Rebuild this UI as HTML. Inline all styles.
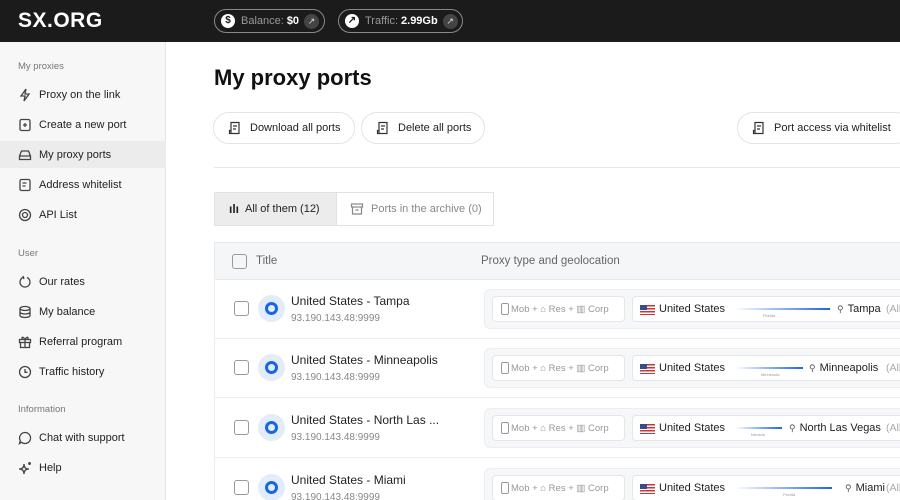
<!DOCTYPE html>
<html><head><meta charset="utf-8"><style>
*{box-sizing:border-box;margin:0;padding:0}
html{overflow:hidden;width:900px;height:500px}
body{width:900px;height:500px;overflow:hidden;background:#fff;font-family:"Liberation Sans",sans-serif;color:#1e1e1e;position:relative}
.a{position:absolute}
.hdr{left:0;top:0;width:900px;height:42px;background:#1b1b1b}
.logo{left:18px;top:9px;color:#fff;font-weight:bold;font-size:21px;letter-spacing:0.5px}
.pill{top:9px;height:24px;border:1.5px solid #8a8a8a;border-radius:12px;color:#9a9a9a;font-size:11px;display:flex;align-items:center;padding-left:6px}
.pill b{color:#fff;margin-left:3px}
.pill .ic{width:14px;height:14px;border-radius:50%;background:#fff;margin-right:6px;color:#1b1b1b;font-size:10px;font-weight:bold;text-align:center;line-height:14px}
.pill .ar{width:15px;height:15px;border-radius:50%;background:#444;color:#ddd;font-size:9px;text-align:center;line-height:15px;margin-left:5px}
.side{left:0;top:42px;width:166px;height:458px;background:#f7f7f7;border-right:1px solid #e6e6e6}
.sec{left:18px;font-size:9.5px;color:#777}
.it{left:0;width:166px;height:27px;font-size:11px;color:#222;display:flex;align-items:center;padding-left:18px}
.it svg{width:14px;height:14px;margin-right:7px;flex:none}
.it.on{background:#ececec}
h1{position:absolute;left:214px;top:65px;font-size:22px;font-weight:bold;color:#111}
.btn{top:112px;height:32px;border:1px solid #e4e4e4;border-radius:16px;font-size:11px;display:flex;align-items:center;padding:0 13px 0 14px;color:#222}
.btn svg{width:14px;height:14px;margin-right:8px}
.tab{top:192px;height:34px;font-size:11px;display:flex;align-items:center}
.thead{left:214px;top:242px;width:690px;height:38px;background:#f5f6f8;border:1px solid #e8e9ec;border-right:none}
.cb{width:15px;height:15px;border:1.5px solid #999;border-radius:3px}
.row{left:214px;width:690px;height:60px;border-left:1px solid #ececec;border-bottom:1px solid #ececec}
.row .cb{position:absolute;left:19px;top:22px}
.row .ci{position:absolute;left:43px;top:16px;width:27px;height:27px;border-radius:50%;background:#e2ecfb}
.row .ci:after{content:"";position:absolute;left:7px;top:7px;width:13px;height:13px;box-sizing:border-box;border:3px solid #1766e8;border-radius:50%}
.row .nm{position:absolute;left:76px;top:15px;font-size:12px;color:#222}
.row .ip{position:absolute;left:76px;top:34px;font-size:10px;color:#888}
.geo{position:absolute;left:269px;top:10px;width:430px;height:40px;background:#f6f7f9;border:1px solid #eceef1;border-radius:6px}
.tp{position:absolute;left:7px;top:6px;width:133px;height:26px;background:#fff;border:1px solid #e6e6e6;border-radius:4px;font-size:9.5px;color:#999;display:flex;align-items:center;padding-left:8px}
.tp i{display:inline-block;width:8px;height:12px;border:1px solid #999;border-radius:2px;margin-right:2px}
.ct{position:absolute;left:147px;top:6px;width:300px;height:26px;background:#fff;border:1px solid #e6e6e6;border-radius:4px;font-size:11px;color:#222}
.flag{position:absolute;left:7px;top:8px;width:15px;height:10px;background:repeating-linear-gradient(#c33 0 1.5px,#fff 1.5px 3px)}
.flag:before{content:"";position:absolute;left:0;top:0;width:7px;height:5px;background:#3b4a8a}
.us{position:absolute;left:26px;top:6px}
.ln{position:absolute;top:11px;left:102px;height:2px;background:linear-gradient(90deg,#fff,#1d63e6)}
.st{position:absolute;top:16px;font-size:4px;color:#999}
.city{position:absolute;top:6px}
.city:before{content:"⚲";font-size:9px;color:#555;margin-right:4px}
.all{position:absolute;top:6px;color:#aaa;font-size:10.5px}
</style></head><body>
<div class="a hdr"></div>
<div class="a logo">SX.ORG</div>
<div class="a pill" style="left:214px;width:111px"><span class="ic">$</span>Balance:<b>$0</b><span class="ar">↗</span></div>
<div class="a pill" style="left:338px;width:125px"><span class="ic">↗</span>Traffic:<b>2.99Gb</b><span class="ar">↗</span></div>

<div class="a side"></div>
<div class="a sec" style="top:61px">My proxies</div>
<div class="a it" style="top:81px"><svg viewBox="0 0 14 14" fill="none" stroke="#444" stroke-width="1.3"><path d="M8 1L3 8h4l-1 5 5-7H7z"/></svg>Proxy on the link</div>
<div class="a it" style="top:111px"><svg viewBox="0 0 14 14" fill="none" stroke="#444" stroke-width="1.3"><rect x="2" y="1.5" width="10" height="11" rx="1.5"/><path d="M7 5v4M5 7h4"/></svg>Create a new port</div>
<div class="a it on" style="top:141px"><svg viewBox="0 0 14 14" fill="none" stroke="#444" stroke-width="1.3"><path d="M1.5 8l2-5h7l2 5v3.5h-11z M1.5 8h11"/></svg>My proxy ports</div>
<div class="a it" style="top:171px"><svg viewBox="0 0 14 14" fill="none" stroke="#444" stroke-width="1.3"><rect x="2" y="1.5" width="10" height="11" rx="1.5"/><path d="M4.5 5h4M4.5 8h3"/></svg>Address whitelist</div>
<div class="a it" style="top:201px"><svg viewBox="0 0 14 14" fill="none" stroke="#444" stroke-width="1.3"><circle cx="7" cy="7" r="5.5"/><circle cx="7" cy="7" r="2.5"/></svg>API List</div>
<div class="a sec" style="top:248px">User</div>
<div class="a it" style="top:268px"><svg viewBox="0 0 14 14" fill="none" stroke="#444" stroke-width="1.3"><path d="M5 2.5A5 5 0 1 0 9 2.5M5 1l1 3"/></svg>Our rates</div>
<div class="a it" style="top:298px"><svg viewBox="0 0 14 14" fill="none" stroke="#444" stroke-width="1.3"><ellipse cx="7" cy="3.5" rx="5" ry="2"/><path d="M2 3.5v7c0 1 2 2 5 2s5-1 5-2v-7M2 7c0 1 2 2 5 2s5-1 5-2"/></svg>My balance</div>
<div class="a it" style="top:328px"><svg viewBox="0 0 14 14" fill="none" stroke="#444" stroke-width="1.3"><rect x="1.5" y="4.5" width="11" height="3"/><path d="M2.5 7.5v5h9v-5M7 4.5v8M7 4.5C5 1 3 2 4.5 4.5M7 4.5C9 1 11 2 9.5 4.5"/></svg>Referral program</div>
<div class="a it" style="top:358px"><svg viewBox="0 0 14 14" fill="none" stroke="#444" stroke-width="1.3"><circle cx="7" cy="7" r="5.5"/><path d="M7 4v3.3h2.5"/></svg>Traffic history</div>
<div class="a sec" style="top:404px">Information</div>
<div class="a it" style="top:424px"><svg viewBox="0 0 14 14" fill="none" stroke="#444" stroke-width="1.3"><path d="M7 1.5a5.5 5.5 0 1 1-3.5 9.7L1.5 12.5l.8-2.8A5.5 5.5 0 0 1 7 1.5z"/></svg>Chat with support</div>
<div class="a it" style="top:454px"><svg viewBox="0 0 14 14" fill="none" stroke="#444" stroke-width="1.3"><path d="M6 3Q6 8 1 8Q6 8 6 13Q6 8 11 8Q6 8 6 3z"/><circle cx="11.5" cy="2.5" r="0.8"/></svg>Help</div>

<h1>My proxy ports</h1>
<div class="a btn" style="left:213px"><svg viewBox="0 0 14 14" fill="none" stroke="#333" stroke-width="1.2"><path d="M3 1.5h8v11H3zM5 5h4M5 8h3M3 12.5H1.5v-3H3"/></svg>Download all ports</div>
<div class="a btn" style="left:361px"><svg viewBox="0 0 14 14" fill="none" stroke="#333" stroke-width="1.2"><path d="M3 1.5h8v11H3zM5 5h4M5 8h3M3 12.5H1.5v-3H3"/></svg>Delete all ports</div>
<div class="a btn" style="left:737px;width:175px"><svg viewBox="0 0 14 14" fill="none" stroke="#333" stroke-width="1.2"><path d="M3 1.5h8v11H3zM5 5h4M5 8h3M3 12.5H1.5v-3H3"/></svg>Port access via whitelist</div>
<div class="a" style="left:214px;top:167px;width:690px;height:1px;background:#e8e8e8"></div>

<div class="a tab" style="left:214px;width:123px;background:#ececec;border:1px solid #e2e2e2;padding-left:14px;color:#222"><span style="font-size:12px;margin-right:6px;font-weight:bold">ılı</span>All of them (12)</div>
<div class="a tab" style="left:337px;width:157px;border:1px solid #e2e2e2;border-left:none;padding-left:13px;color:#888"><svg width="14" height="14" viewBox="0 0 14 14" fill="none" stroke="#888" stroke-width="1.2" style="margin-right:7px"><rect x="1.5" y="2" width="11" height="3"/><path d="M2.5 5v7h9V5M5.5 8h3"/></svg>Ports in the archive (0)</div>

<div class="a thead"><div class="cb a" style="left:17px;top:11px"></div><span class="a" style="left:41px;top:12px;font-size:11.5px;color:#666">Title</span><span class="a" style="left:266px;top:12px;font-size:11.5px;color:#666">Proxy type and geolocation</span></div>

<div class="a row" style="top:279px"><div class="cb"></div><div class="ci"></div><div class="nm">United States - Tampa</div><div class="ip">93.190.143.48:9999</div>
<div class="geo"><div class="tp"><i></i>Mob + ⌂ Res + ▥ Corp</div><div class="ct"><div class="flag"></div><span class="us">United States</span><div class="ln" style="width:95px"></div><span class="st" style="left:130px">Florida</span><span class="city" style="left:204px">Tampa</span><span class="all" style="left:253px">(All</span></div></div></div>

<div class="a row" style="top:338px"><div class="cb"></div><div class="ci"></div><div class="nm">United States - Minneapolis</div><div class="ip">93.190.143.48:9999</div>
<div class="geo"><div class="tp"><i></i>Mob + ⌂ Res + ▥ Corp</div><div class="ct"><div class="flag"></div><span class="us">United States</span><div class="ln" style="width:68px"></div><span class="st" style="left:128px">Minnesota</span><span class="city" style="left:176px">Minneapolis</span><span class="all" style="left:253px">(All</span></div></div></div>

<div class="a row" style="top:398px"><div class="cb"></div><div class="ci"></div><div class="nm">United States - North Las ...</div><div class="ip">93.190.143.48:9999</div>
<div class="geo"><div class="tp"><i></i>Mob + ⌂ Res + ▥ Corp</div><div class="ct"><div class="flag"></div><span class="us">United States</span><div class="ln" style="width:47px"></div><span class="st" style="left:118px">Nevada</span><span class="city" style="left:156px">North Las Vegas</span><span class="all" style="left:253px">(All</span></div></div></div>

<div class="a row" style="top:458px"><div class="cb"></div><div class="ci"></div><div class="nm">United States - Miami</div><div class="ip">93.190.143.48:9999</div>
<div class="geo"><div class="tp"><i></i>Mob + ⌂ Res + ▥ Corp</div><div class="ct"><div class="flag"></div><span class="us">United States</span><div class="ln" style="width:97px"></div><span class="st" style="left:150px">Florida</span><span class="city" style="left:212px">Miami</span><span class="all" style="left:253px">(All</span></div></div></div>
</body></html>
